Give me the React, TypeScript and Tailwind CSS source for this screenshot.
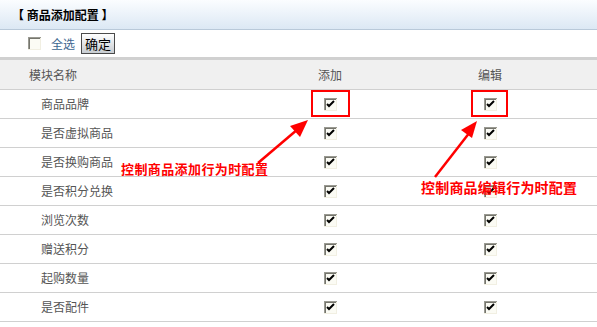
const rows = ["商品品牌", "是否虚拟商品", "是否换购商品", "是否积分兑换", "浏览次数", "赠送积分", "起购数量", "是否配件"];

const Check = ({ checked = true }: { checked?: boolean }) => (
  <svg width="13" height="13" viewBox="0 0 13 13" className="block">
    <rect x="0" y="0" width="13" height="13" fill="#fbfbf4" />
    <path d="M0 0H13V1H1V13H0Z" fill="#9a9a92" />
    <path d="M1 1H12V2H2V12H1Z" fill="#75756d" />
    <path d="M12 1H13V13H0V12H12Z" fill="#f1efe2" />
    {checked && <path d="M3 6L5 8L10 3" stroke="#000" strokeWidth="2" fill="none" />}
  </svg>
);

export default function App() {
  return (
    <div className="relative w-[597px] h-[327px] bg-white text-[12px] text-[#555] overflow-hidden" style={{ fontFamily: '"Noto Sans CJK SC", "Liberation Sans", sans-serif' }}>
      <div className="h-[30px] flex items-center pl-[12px] border-b border-[#b9c9d9] bg-gradient-to-b from-[#fbfdff] to-[#dce8f4] text-black font-bold">
        【 商品添加配置 】
      </div>
      <div className="h-[27px] flex items-center pl-[28px]">
        <Check checked={false} />
        <span className="ml-[10px] text-[#3d6690]">全选</span>
        <button className="ml-[6px] h-[21px] px-[3px] border border-[#4a4a4a] bg-gradient-to-b from-white to-[#c8cdd2] text-[13px] leading-none text-black">确定</button>
      </div>
      <div className="h-[3px] bg-[#d0d0d0]" />
      <div className="h-[30px] grid grid-cols-[250px_160px_160px_1fr] items-center bg-[#f0f0f0] border-b border-[#d0d0d0]">
        <span className="pl-[29px]">模块名称</span>
        <span className="text-center">添加</span>
        <span className="text-center">编辑</span>
      </div>
      {rows.map((name) => (
        <div key={name} className="h-[29px] grid grid-cols-[250px_160px_160px_1fr] items-center border-b border-[#d0d0d0]">
          <span className="pl-[41px]">{name}</span>
          <span className="flex justify-center pl-px"><Check /></span>
          <span className="flex justify-center pl-px"><Check /></span>
        </div>
      ))}

      <div className="absolute left-[311px] top-[90px] w-[39px] h-[27px] border-2 border-[#ff0000]" />
      <div className="absolute left-[471px] top-[90px] w-[37px] h-[27px] border-2 border-[#ff0000]" />

      <svg className="absolute inset-0 pointer-events-none" width="597" height="327">
        <line x1="258" y1="163" x2="298" y2="129" stroke="#ff0000" strokeWidth="2.5" />
        <polygon points="308,120 290,126 300,137" fill="#ff0000" />
        <line x1="435" y1="177" x2="470" y2="132" stroke="#ff0000" strokeWidth="2.5" />
        <polygon points="477,121 461,130 472,138" fill="#ff0000" />
      </svg>

      <span className="absolute left-[121px] top-[162px] text-[13px] tracking-[0.4px] font-bold text-[#ff0000] leading-none">控制商品添加行为时配置</span>
      <span className="absolute left-[421px] top-[180px] text-[14px] tracking-[0.2px] font-bold text-[#ff0000] leading-none">控制商品编辑行为时配置</span>
    </div>
  );
}
